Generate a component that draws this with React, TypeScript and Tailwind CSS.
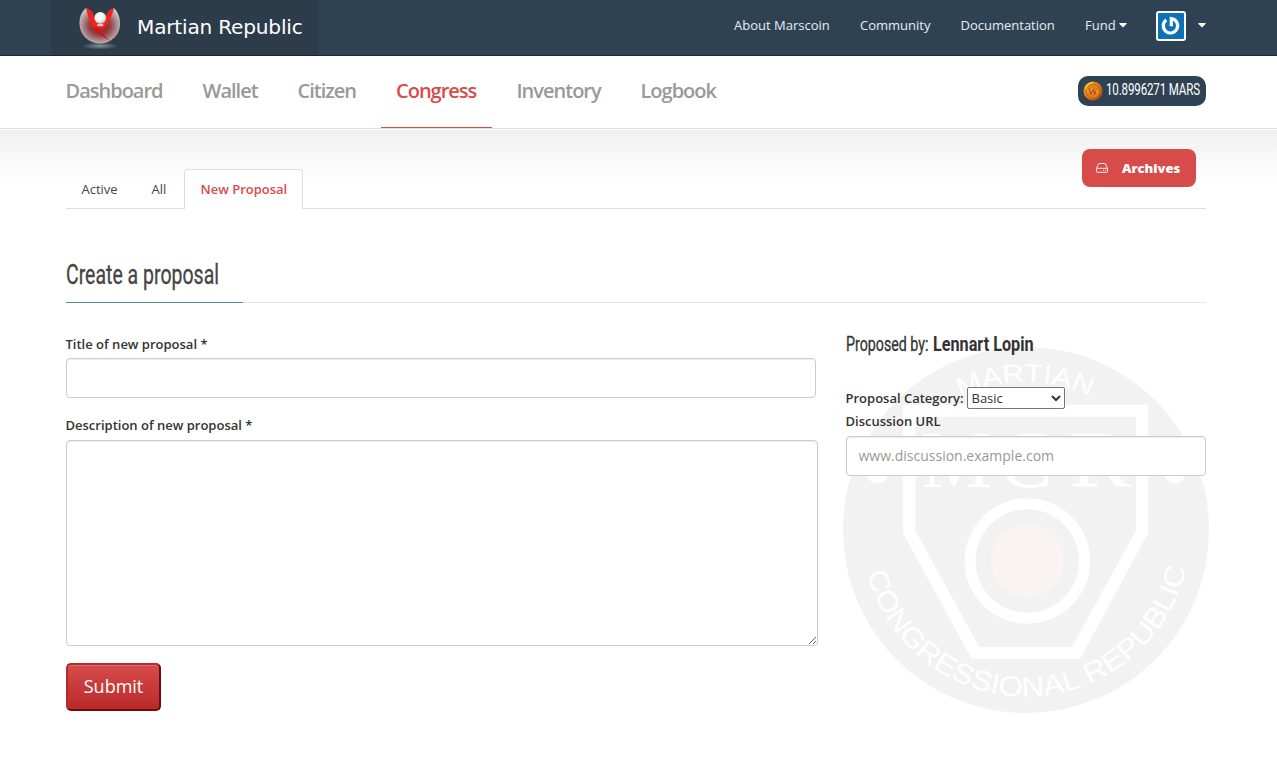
import React from "react";

const topLinks = [
  { label: "About Marscoin", cls: "w-[126px]" },
  { label: "Community", cls: "w-[100.5px]" },
  { label: "Documentation", cls: "w-[124.5px]" },
];

const sections = [
  { label: "Dashboard", cls: "w-[127px] text-[#999]" },
  { label: "Wallet", cls: "w-[85px] text-[#999]" },
  { label: "Citizen", cls: "w-[88.5px] text-[#999]" },
  { label: "Congress", cls: "w-[110.5px] text-[#d74b4b] border-b border-[#d74b4b]" },
  { label: "Inventory", cls: "w-[114px] text-[#999]" },
  { label: "Logbook", cls: "w-[107px] text-[#999]" },
];

function BrandMark() {
  return (
    <svg width="46" height="46" viewBox="0 0 46 46" className="shrink-0 mb-[2px]">
      <defs>
        <radialGradient id="orb" cx="50%" cy="50%" r="55%">
          <stop offset="0" stopColor="#8e1214" />
          <stop offset="0.5" stopColor="#94464a" />
          <stop offset="1" stopColor="#c2c6c8" />
        </radialGradient>
        <radialGradient id="head" cx="45%" cy="40%" r="60%">
          <stop offset="0" stopColor="#fff" />
          <stop offset="0.6" stopColor="#f2f2f2" />
          <stop offset="1" stopColor="#aaa" />
        </radialGradient>
        <radialGradient id="glow">
          <stop offset="0" stopColor="#9fb8b8" stopOpacity="0.7" />
          <stop offset="1" stopColor="#9fb8b8" stopOpacity="0" />
        </radialGradient>
      </defs>
      <ellipse cx="23" cy="42" rx="18" ry="3.500" fill="url(#glow)" />
      <path d="M9 4C4.500 8 2.300 13.500 2.500 20C3 31.500 12 39.500 23 39.500S43 31 43 20C43 13 41 8 37 4L31 8L27 18H19L15 8Z" fill="url(#orb)" />
      <path d="M9 4.500C11 11 12.500 19 16.500 23.500C19 26.500 21 27.500 22.500 28.500C28 24 33 18 37 4.500C33.500 4 31 7 29.500 11L28 17.500C24 21 20.500 21 18 17.500L16.500 10C15 6.500 12 4.500 9 4.500Z" fill="#f4201b" />
      <path d="M20 24L25 24L24 28L33 37L20 28.500L16 23.500Z" fill="#c9191a" />
      <circle cx="23.300" cy="14" r="6" fill="url(#head)" />
      <ellipse cx="23.300" cy="21" rx="3.300" ry="1.300" fill="#d8c8c8" />
    </svg>
  );
}

function Caret() {
  return (
    <svg width="8" height="5" viewBox="0 0 8 5" className="mt-px">
      <path d="M0.500 0H7.500Q8 0.500 7.500 1L4 4.500L0.500 1Q0 0.500 0.500 0Z" fill="#fff" />
    </svg>
  );
}

function Avatar() {
  return (
    <span className="mt-px flex size-[30px] items-center justify-center rounded-[3px] border-2 border-white bg-[#0a72b5]">
      <svg width="26" height="26" viewBox="0 0 26 26" fill="none" stroke="#fff">
        <path d="M8.300 6.900A7.200 7.200 0 1 0 13.300 5.600V13.200" strokeWidth="3.200" />
      </svg>
    </span>
  );
}

function Coin() {
  return (
    <svg width="20" height="20" viewBox="0 0 20 20" className="shrink-0">
      <defs>
        <linearGradient id="coin" x1="0" y1="0" x2="1" y2="1">
          <stop offset="0" stopColor="#f2a81c" />
          <stop offset="0.500" stopColor="#e07a1a" />
          <stop offset="1" stopColor="#9c330b" />
        </linearGradient>
      </defs>
      <circle cx="10" cy="10" r="9.500" fill="url(#coin)" />
      <circle cx="10" cy="10" r="7" fill="#e0801f" stroke="#c8600f" strokeWidth="0.800" />
      <path d="M5.500 7L8 13L10 8L12 13L14.500 7" fill="none" stroke="#b8540e" strokeWidth="1.200" />
      <path d="M5 12V8M9.500 7L8 10M14 8V12" fill="none" stroke="#f4b545" strokeWidth="1" />
      <path d="M2.500 8Q4 2.500 10 1.500" fill="none" stroke="#f7c632" strokeWidth="1.500" />
    </svg>
  );
}

function Seal() {
  return (
    <svg
      className="pointer-events-none absolute -left-[2.5px] top-[14px]"
      width="367"
      height="367"
      viewBox="843 347 367 367"
      fill="#fff"
    >
      <defs>
        <path id="arcTop" d="M878 530A148 148 0 0 1 1174 530" />
        <path id="arcBottom" d="M862 532.500A164 164 0 0 0 1190 532.500" />
      </defs>
      <circle cx="1026" cy="530" r="183" fill="#f2f2f2" />
      <path
        fillRule="evenodd"
        d="M903 404.700H1148V533L1080 659H971.700L903 533ZM915.300 416.700V530.500L979 646.700H1072L1136 530.500V416.700Z"
      />
      <circle cx="1027.300" cy="561" r="57.200" fill="none" stroke="#fff" strokeWidth="11" />
      <circle cx="1027.300" cy="561" r="36.400" fill="#f9f3f3" />
      <circle cx="877.500" cy="473" r="10.500" />
      <circle cx="1174.700" cy="473" r="10.500" />
      <g fontFamily="'Liberation Serif', serif" fontSize="80">
        <text x="921" y="487" textLength="71" lengthAdjust="spacingAndGlyphs">M</text>
        <text x="999" y="487">C</text>
        <text x="1069" y="487" textLength="62" lengthAdjust="spacingAndGlyphs">R</text>
      </g>
      <g fontFamily="'Liberation Sans', sans-serif">
        <text fontSize="26">
          <textPath href="#arcTop" startOffset="164.500" textLength="134" lengthAdjust="spacingAndGlyphs">MARTIAN</textPath>
        </text>
        <text fontSize="28">
          <textPath href="#arcBottom" startOffset="41" textLength="438" lengthAdjust="spacingAndGlyphs">CONGRESSIONAL REPUBLIC</textPath>
        </text>
      </g>
    </svg>
  );
}

export default function App() {
  return (
    <div className="h-[758px] overflow-hidden bg-white font-['Open_Sans',sans-serif] text-[13px] leading-[18px] text-[#333]">
      <header className="h-14 border-b border-[#1a2630] bg-[#2f4254]">
        <div className="ml-[50.5px] flex h-full w-[1170px] pr-[14.5px]">
          <a className="flex h-full w-[267px] items-center bg-[#2d3c4b] pl-[26px]">
            <BrandMark />
            <span className="mb-[2px] ml-[14px] origin-left scale-x-[1.005] whitespace-nowrap font-['DejaVu_Sans',sans-serif] text-[20px] tracking-[-0.200px] text-white">
              Martian Republic
            </span>
          </a>
          <nav className="ml-auto flex h-[50px] items-center text-white/90">
            {topLinks.map((l) => (
              <a key={l.label} className={l.cls}>{l.label}</a>
            ))}
            <a className="flex w-[71px] items-center gap-[3px]">Fund <Caret /></a>
            <a className="flex items-center gap-3"><Avatar /><Caret /></a>
          </nav>
        </div>
      </header>

      <div className="h-[73px] border-b border-[#ddd]">
        <div className="ml-[50.5px] flex h-full w-[1170px] justify-between pr-[15px]">
          <nav className="flex gap-[10px]">
            {sections.map((s) => (
              <a key={s.label} className={`h-[72px] whitespace-nowrap pl-[15px] pt-[21px] text-[20px] font-semibold leading-7 tracking-[-1px] ${s.cls}`}>
                {s.label}
              </a>
            ))}
          </nav>
          <div className="mt-5 flex h-[30px] w-[128px] items-center rounded-[10px] bg-[#2f4254] pl-[5px]">
            <Coin />
            <span className="mb-[2px] ml-[3px] w-[94px] origin-left scale-x-[0.722] whitespace-nowrap font-['Roboto',sans-serif] text-[16px] tracking-[-0.200px] text-white">
              10.8996271 MARS
            </span>
          </div>
        </div>
      </div>

      <div className="mt-px bg-[linear-gradient(#f0f0f0,#fff_50px)]">
        <main className="ml-[50.5px] w-[1170px] px-[15px]">
          <div className="flex h-[79px] justify-between border-b border-[#ddd]">
            <div className="flex items-end text-[#444]">
              <a className="h-[28px] w-[70px] pl-[16px]">Active</a>
              <a className="h-[28px] w-[48px] pl-[16px]">All</a>
              <a className="-mb-px h-[40px] w-[119px] rounded-t border border-b-0 border-[#ddd] bg-white pl-[16px] pt-[10px] font-semibold text-[#d74b4b]">
                New Proposal
              </a>
            </div>
            <button className="mr-[10px] mt-[19px] flex h-[38px] w-[114px] items-center rounded-lg bg-[#d74b4b] pl-[14px] font-extrabold text-white">
              <svg width="12" height="10" viewBox="0 0 12 10" fill="none" stroke="#fff" strokeWidth="0.900" className="mb-px">
                <path d="M0.500 5.500L2.300 1.200Q2.500 0.500 3.200 0.500H8.800Q9.500 0.500 9.700 1.200L11.500 5.500V8.500Q11.500 9.300 10.700 9.300H1.300Q0.500 9.300 0.500 8.500V6Q0.500 5.300 1.300 5.300H10.700Q11.500 5.300 11.500 6" />
                <path d="M7 7.400H8M9 7.400H10" />
              </svg>
              <span className="ml-[14.5px]">Archives</span>
            </button>
          </div>

          <div className="mt-[48px] flex h-[46px] border-b border-[#e5e5e5]">
            <h3 className="-mb-px w-[177px] border-b border-[#5f87ad] pt-[4px]">
              <span className="inline-block origin-left scale-x-[0.722] whitespace-nowrap font-['Roboto',sans-serif] text-[27px] leading-7 text-[#444] [-webkit-text-stroke:0.300px_#444]">
                Create a proposal
              </span>
            </h3>
          </div>

          <div className="mt-[30px] flex gap-[30px]">
            <form className="w-[750px] shrink-0">
              <label className="block pt-[2px] font-semibold">Title of new proposal *</label>
              <input className="mt-[5px] block h-10 w-full rounded border border-[#ccc] bg-white px-3 shadow-[inset_0_1px_1px_rgba(0,0,0,0.075)]" />
              <label className="mt-[18px] block font-semibold">Description of new proposal *</label>
              <textarea className="mt-[6px] block h-[206px] w-[752px] resize rounded border border-[#ccc] bg-white px-3 shadow-[inset_0_1px_1px_rgba(0,0,0,0.075)]" />
              <button type="button" className="mt-[17px] h-[48px] w-[95px] rounded-[5px] border-2 border-t-[#b52b2b] border-l-[#b52b2b] border-r-[#6d0d0d] border-b-[#6d0d0d] bg-[linear-gradient(#d74b4b,#ba2a2a)] pb-[2px] pl-px text-[18px] text-white shadow-[inset_0_1px_0_rgba(255,255,255,0.2)]">
                Submit
              </button>
            </form>

            <aside className="relative h-[390px] w-[360px]">
              <Seal />
              <div className="relative">
                <h4 className="flex h-[22px] whitespace-nowrap font-['Roboto',sans-serif] text-[20px] leading-[23px]">
                  <span className="w-[87px] origin-left scale-x-[0.712] [-webkit-text-stroke:0.300px_#333]">Proposed by:</span>
                  <b className="origin-left scale-x-[0.810]">Lennart Lopin</b>
                </h4>
                <div className="mt-[32px] flex h-[22px] items-center">
                  <label className="w-[121px] whitespace-nowrap font-semibold">Proposal Category:</label>
                  <select className="h-[22px] w-[98px] rounded-[2px] border border-[#767676] bg-white text-[13px]">
                    <option>Basic</option>
                  </select>
                </div>
                <label className="mt-[3px] block font-semibold">Discussion URL</label>
                <input
                  placeholder="www.discussion.example.com"
                  className="mt-[6px] block h-10 w-full rounded border border-[#ccc] bg-white px-3 pb-[2px] text-[14px] shadow-[inset_0_1px_1px_rgba(0,0,0,0.075)] placeholder:text-[#999]"
                />
              </div>
            </aside>
          </div>
        </main>
      </div>
    </div>
  );
}
